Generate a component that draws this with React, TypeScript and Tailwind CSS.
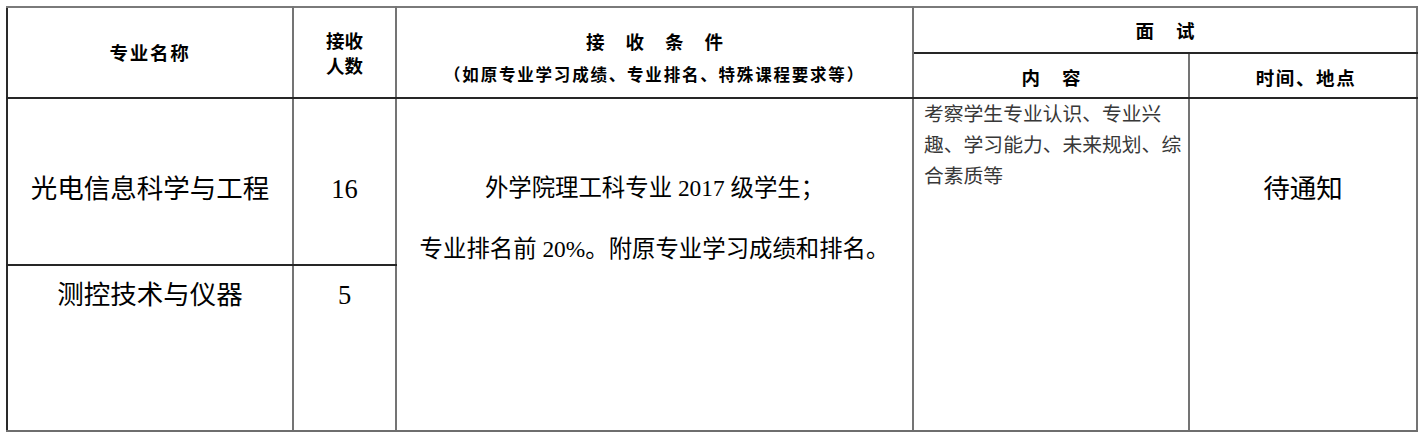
const sans = "font-['Noto_Sans_CJK_SC','Noto_Sans',sans-serif]";
const serif = "font-['Liberation_Serif','Noto_Sans_CJK_SC',serif]";

const vr = "border-r-2 border-r-[#747474]";
const hbDark = "border-b-2 border-b-[#262626]";
const hbGray = "border-b-2 border-b-[#6e6e6e]";

function Spaced({ chars, gap }: { chars: string[]; gap: string }) {
  return (
    <div className={`flex justify-center ${gap}`}>
      {chars.map((c) => (
        <span key={c}>{c}</span>
      ))}
    </div>
  );
}

export default function App() {
  return (
    <div className="bg-white w-[1422px] h-[438px] pl-[6px] pt-[6px]">
      <table className="table-fixed border-collapse w-[1410px] border-t-2 border-t-[#7a7a7a] border-l-2 border-l-[#2a2a2a] text-black">
        <colgroup>
          <col className="w-[286px]" />
          <col className="w-[103px]" />
          <col className="w-[517px]" />
          <col className="w-[276px]" />
          <col className="w-[228px]" />
        </colgroup>
        <thead className={`${sans} font-bold`}>
          <tr className="h-[46px]">
            <th rowSpan={2} className={`${vr} ${hbDark} align-middle p-0 text-[18.5px] tracking-[1.8px] leading-[25px] font-bold`}>
              专业名称
            </th>
            <th rowSpan={2} className={`${vr} ${hbDark} align-middle p-0 text-[18.5px] leading-[25px] font-bold`}>
              <div>接收</div>
              <div>人数</div>
            </th>
            <th rowSpan={2} className={`${vr} ${hbDark} align-middle p-0 pt-[10px] font-bold`}>
              <div className="text-[18.5px] leading-[33px]">
                <Spaced chars={["接", "收", "条", "件"]} gap="gap-[21px]" />
              </div>
              <div className="text-[16.5px] leading-[33px] tracking-[1.8px]">
                （如原专业学习成绩、专业排名、特殊课程要求等）
              </div>
            </th>
            <th colSpan={2} className={`${vr} ${hbDark} align-middle p-0 text-[18.5px] leading-[25px] font-bold`}>
              <Spaced chars={["面", "试"]} gap="gap-[22px]" />
            </th>
          </tr>
          <tr className="h-[45px]">
            <th className={`${vr} ${hbDark} align-middle p-0 pt-[3px] text-[18.5px] leading-[25px] font-bold`}>
              <Spaced chars={["内", "容"]} gap="gap-[22px]" />
            </th>
            <th className={`${vr} ${hbDark} align-middle p-0 pt-[3px] pl-[6px] text-[18.5px] tracking-[1.6px] leading-[25px] font-bold`}>
              时间、地点
            </th>
          </tr>
        </thead>
        <tbody className={serif}>
          <tr className="h-[167px]">
            <td className={`${vr} ${hbDark} align-top p-0 pt-[75px] text-center text-[26.5px] leading-[30px]`}>
              光电信息科学与工程
            </td>
            <td className={`${vr} ${hbDark} align-top p-0 pt-[75px] text-center text-[26.5px] leading-[30px]`}>
              16
            </td>
            <td rowSpan={2} className={`${vr} ${hbGray} align-top p-0 pt-[74px] text-center text-[23.4px] leading-[30px]`}>
              <p>外学院理工科专业 2017 级学生；</p>
              <p className="mt-[31px]">专业排名前 20%。附原专业学习成绩和排名。</p>
            </td>
            <td rowSpan={2} className={`${vr} ${hbGray} align-top p-0 pt-0 pl-[10px] text-left text-[19.8px] leading-[31px] text-[#383838]`}>
              考察学生专业认识、专业兴
              <br />
              趣、学习能力、未来规划、综
              <br />
              合素质等
            </td>
            <td rowSpan={2} className={`${vr} ${hbGray} align-top p-0 pt-[75px] text-center text-[26.5px] leading-[30px]`}>
              待通知
            </td>
          </tr>
          <tr className="h-[166px]">
            <td className={`${vr} ${hbGray} align-top p-0 pt-[14px] text-center text-[26.5px] leading-[30px]`}>
              测控技术与仪器
            </td>
            <td className={`${vr} ${hbGray} align-top p-0 pt-[14px] text-center text-[26.5px] leading-[30px]`}>
              5
            </td>
          </tr>
        </tbody>
      </table>
    </div>
  );
}
